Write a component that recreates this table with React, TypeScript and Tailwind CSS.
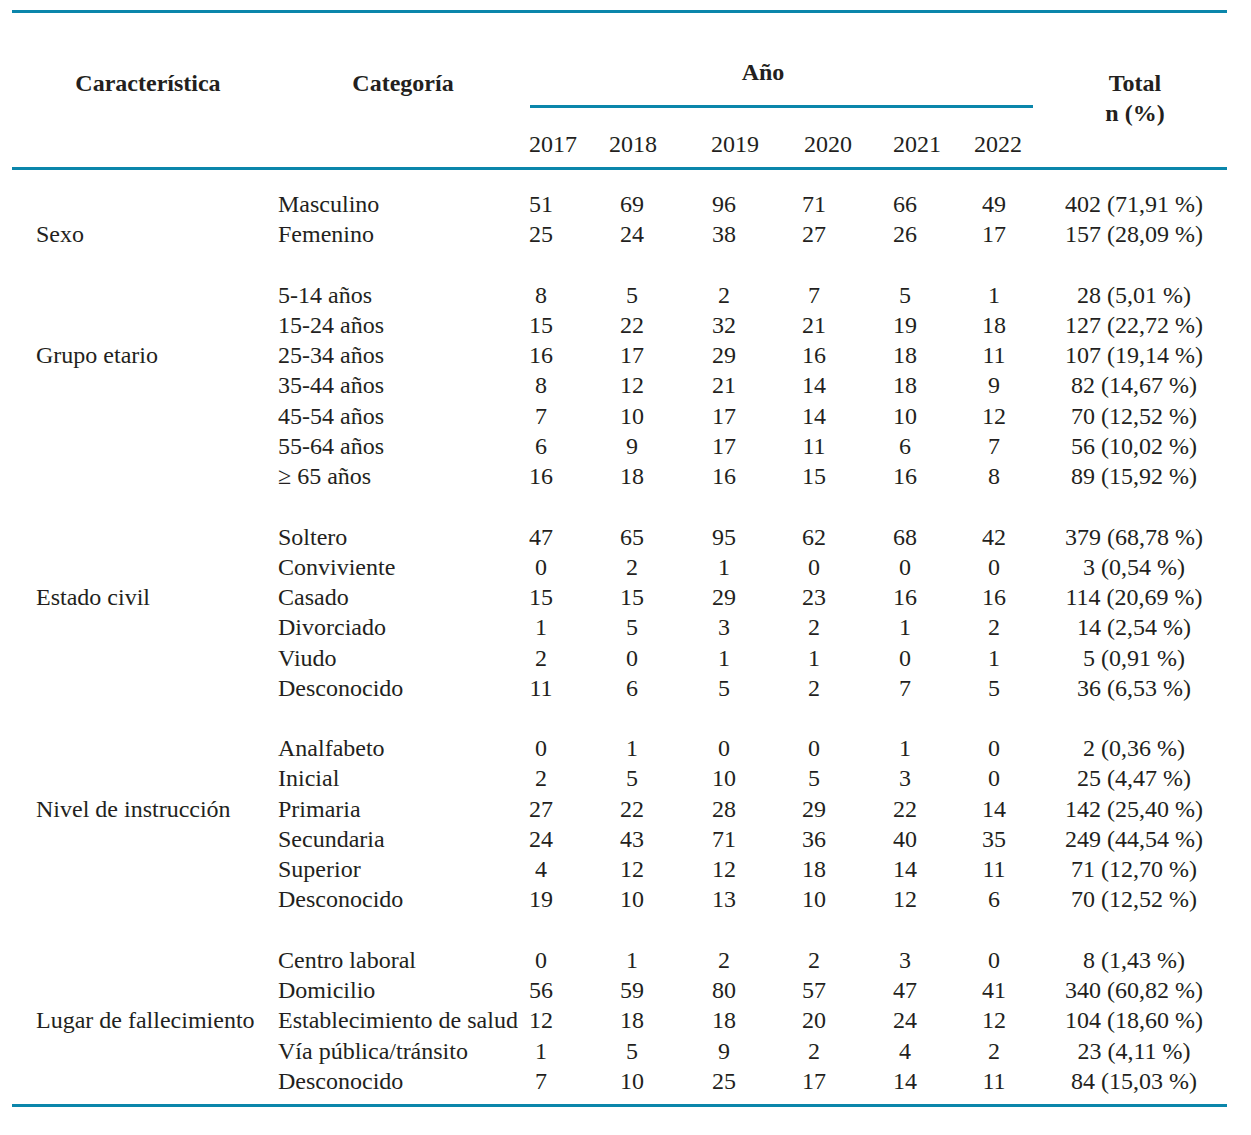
type Row = { cat: string; values: number[]; total: string };
type Group = { name: string; labelRow: number; rows: Row[] };

const groups: Group[] = [
  {
    name: "Sexo",
    labelRow: 1,
    rows: [
      { cat: "Masculino", values: [51, 69, 96, 71, 66, 49], total: "402 (71,91 %)" },
      { cat: "Femenino", values: [25, 24, 38, 27, 26, 17], total: "157 (28,09 %)" },
    ],
  },
  {
    name: "Grupo etario",
    labelRow: 2,
    rows: [
      { cat: "5-14 años", values: [8, 5, 2, 7, 5, 1], total: "28 (5,01 %)" },
      { cat: "15-24 años", values: [15, 22, 32, 21, 19, 18], total: "127 (22,72 %)" },
      { cat: "25-34 años", values: [16, 17, 29, 16, 18, 11], total: "107 (19,14 %)" },
      { cat: "35-44 años", values: [8, 12, 21, 14, 18, 9], total: "82 (14,67 %)" },
      { cat: "45-54 años", values: [7, 10, 17, 14, 10, 12], total: "70 (12,52 %)" },
      { cat: "55-64 años", values: [6, 9, 17, 11, 6, 7], total: "56 (10,02 %)" },
      { cat: "≥ 65 años", values: [16, 18, 16, 15, 16, 8], total: "89 (15,92 %)" },
    ],
  },
  {
    name: "Estado civil",
    labelRow: 2,
    rows: [
      { cat: "Soltero", values: [47, 65, 95, 62, 68, 42], total: "379 (68,78 %)" },
      { cat: "Conviviente", values: [0, 2, 1, 0, 0, 0], total: "3 (0,54 %)" },
      { cat: "Casado", values: [15, 15, 29, 23, 16, 16], total: "114 (20,69 %)" },
      { cat: "Divorciado", values: [1, 5, 3, 2, 1, 2], total: "14 (2,54 %)" },
      { cat: "Viudo", values: [2, 0, 1, 1, 0, 1], total: "5 (0,91 %)" },
      { cat: "Desconocido", values: [11, 6, 5, 2, 7, 5], total: "36 (6,53 %)" },
    ],
  },
  {
    name: "Nivel de instrucción",
    labelRow: 2,
    rows: [
      { cat: "Analfabeto", values: [0, 1, 0, 0, 1, 0], total: "2 (0,36 %)" },
      { cat: "Inicial", values: [2, 5, 10, 5, 3, 0], total: "25 (4,47 %)" },
      { cat: "Primaria", values: [27, 22, 28, 29, 22, 14], total: "142 (25,40 %)" },
      { cat: "Secundaria", values: [24, 43, 71, 36, 40, 35], total: "249 (44,54 %)" },
      { cat: "Superior", values: [4, 12, 12, 18, 14, 11], total: "71 (12,70 %)" },
      { cat: "Desconocido", values: [19, 10, 13, 10, 12, 6], total: "70 (12,52 %)" },
    ],
  },
  {
    name: "Lugar de fallecimiento",
    labelRow: 2,
    rows: [
      { cat: "Centro laboral", values: [0, 1, 2, 2, 3, 0], total: "8 (1,43 %)" },
      { cat: "Domicilio", values: [56, 59, 80, 57, 47, 41], total: "340 (60,82 %)" },
      { cat: "Establecimiento de salud", values: [12, 18, 18, 20, 24, 12], total: "104 (18,60 %)" },
      { cat: "Vía pública/tránsito", values: [1, 5, 9, 2, 4, 2], total: "23 (4,11 %)" },
      { cat: "Desconocido", values: [7, 10, 25, 17, 14, 11], total: "84 (15,03 %)" },
    ],
  },
];

const years = ["2017", "2018", "2019", "2020", "2021", "2022"];
const yearPad = ["pl-[24px]", "pl-[2px]", "pl-[22px]", "pl-[28px]", "pl-[24px]", "pl-[8px]"];

const cols = "grid grid-cols-[258px_226px_90px_92px_92px_88px_94px_84px_191px]";
const rule = "h-[3px] bg-[#0b86ab]";

export default function App() {
  return (
    <div className="min-h-[1135px] bg-white pl-[12px] pr-[24px] pt-[10px] font-['Liberation_Serif',serif] text-[24px] text-[#231f20]">
      <div className={rule} />

      <div className={`${cols} h-[154px] font-bold`}>
        <div className="row-span-2 pl-[14px] pt-[55px] text-center leading-[30px]">Característica</div>
        <div className="row-span-2 pl-[40px] pt-[55px] text-center leading-[30px]">Categoría</div>
        <div className="col-span-6 pt-[44px]">
          <div className="pr-[6px] text-center leading-[30px]">Año</div>
          <div className={`${rule} ml-[34px] mr-[3px] mt-[18px]`} />
        </div>
        <div className="row-span-2 pl-[7px] pt-[55px] text-center leading-[30px]">
          <div>Total</div>
          <div>n (%)</div>
        </div>
        {years.map((y, i) => (
          <div key={y} className={`${yearPad[i]} pt-[12px] text-center font-normal leading-[30px]`}>
            {y}
          </div>
        ))}
      </div>

      <div className={rule} />

      <div className="pb-[8px] pt-[19px]">
        {groups.map((g, gi) => (
          <div key={g.name} className={gi > 0 ? "pt-[30.24px]" : ""}>
            {g.rows.map((r, ri) => (
              <div key={r.cat} className={`${cols} h-[30.24px] leading-[30.24px] whitespace-nowrap`}>
                <div className="pl-[24px]">{ri === g.labelRow ? g.name : ""}</div>
                <div className="pl-[8px]">{r.cat}</div>
                {r.values.map((v, vi) => (
                  <div key={vi} className="text-center">
                    {v}
                  </div>
                ))}
                <div className="pl-[5px] text-center">{r.total}</div>
              </div>
            ))}
          </div>
        ))}
      </div>

      <div className={rule} />
    </div>
  );
}
